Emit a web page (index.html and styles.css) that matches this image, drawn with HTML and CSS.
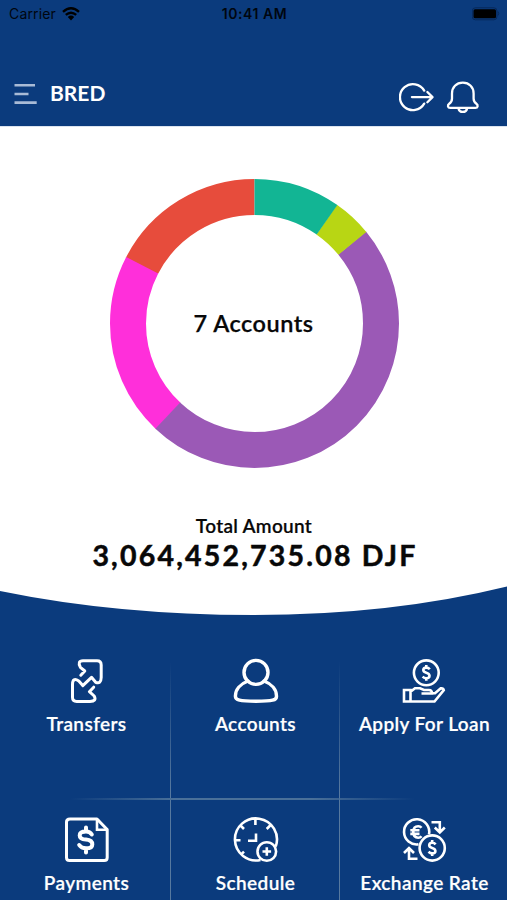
FILE: index.html
```html
<!DOCTYPE html>
<html lang="en">
<head>
<meta charset="utf-8">
<meta name="viewport" content="width=device-width, initial-scale=1">
<title>BRED</title>
<link rel="stylesheet" href="styles.css">
</head>
<body>
<div class="app">
  <header class="header">
    <div class="status">
      <div class="carrier">
        <span>Carrier</span>
        <svg width="18" height="14" viewBox="0 0 18 14"><path d="M1 4.8Q9-2.3 17 4.8M3.8 7.9Q9 3.4 14.2 7.9" fill="none" stroke="#000" stroke-width="2.4"/><path d="M5.8 10Q9 7.2 12.2 10L9 13.4Z"/></svg>
      </div>
      <div class="clock">10:41 AM</div>
      <svg class="battery" width="28" height="14" viewBox="0 0 28 14"><rect x=".3" y=".8" width="24.6" height="12" rx="3" fill="none" stroke="#07295b"/><rect x="1.5" y="2.3" width="22.5" height="9" rx="1.5"/><path d="M26 4.5q1.5 2 0 4" stroke="#07295b" fill="none"/></svg>
    </div>
    <div class="navbar">
      <svg class="menu" width="24" height="24" viewBox="0 0 24 24"><path d="M.5 2.2H21M.5 11H14.5M.5 19.6H22.7"/></svg>
      <h1 class="brand">BRED</h1>
      <svg class="nav-icon" width="36" height="34" viewBox="0 0 36 34"><path d="M25.2 9.6A13 13 0 1 0 25.2 22.6M12.9 16.1H33M28.4 11L33.5 16.1 28.4 21.2"/></svg>
      <svg class="nav-icon" width="34" height="34" viewBox="0 0 34 34"><path d="M16.8 1.7C10.3 1.7 6 6.3 6 12.5V17.5C6 20 4.8 21.7 3.2 22.8C1.1 24.3 1.8 26.9 4.2 26.9H29.4C31.8 26.9 32.5 24.3 30.4 22.8C28.8 21.7 27.6 20 27.6 17.5V12.5C27.6 6.3 23.3 1.7 16.8 1.7ZM12.5 27.4Q13.2 30.9 16.8 30.9T21.1 27.4"/></svg>
    </div>
  </header>

  <main class="summary">
    <div class="chart">
      <svg class="donut" width="290" height="290" viewBox="-145.5 -145.5 290 290">
        <g transform="rotate(-90)" fill="none" stroke-width="36">
          <circle r="126.5" stroke="#e74c3c" pathLength="360" stroke-dasharray="0 297 63 360"/>
          <circle r="126.5" stroke="#ff2fda" pathLength="360" stroke-dasharray="0 223 74.4 360"/>
          <circle r="126.5" stroke="#9b59b6" pathLength="360" stroke-dasharray="0 50.5 172.8 360"/>
          <circle r="126.5" stroke="#b8d614" pathLength="360" stroke-dasharray="0 34.8 15.9 360"/>
          <circle r="126.5" stroke="#12b594" pathLength="360" stroke-dasharray="35 360"/>
        </g>
      </svg>
      <div class="count">7 Accounts</div>
    </div>
    <div class="total-label">Total Amount</div>
    <div class="total">3,064,452,735.08 DJF</div>
  </main>
  <svg class="curve" width="507" height="36" viewBox="0 0 507 36"><path d="M0 0H507V6.5Q391 35 254 35T0 11Z"/></svg>

  <nav class="grid">
    <a class="tile">
      <svg class="icon" width="46" height="46" viewBox="0 0 46 46"><path d="M16.8 17.2L20.8 13 16.4 9.3Q13 3 19 2.8H33Q37.2 2.8 37.2 7V19.5Q37 26.5 31.7 24.3L27.5 19.3 18.8 27.6 14.8 23Q8.5 19 8.5 26.5V39.3Q8.5 43.5 12.7 43.5H26Q33 43.3 30.2 38L25.4 33.7 29.7 29.2"/></svg>
      <span class="label">Transfers</span>
    </a>
    <a class="tile">
      <svg class="icon thick" width="46" height="46" viewBox="0 0 46 46"><circle cx="23" cy="14.4" r="12"/><path d="M15 23C7 26 2.5 32 2.4 38C2.2 42.2 6.5 43.3 23 43.3S43.8 42.2 43.5 38C43.4 32 39 26 31 23"/></svg>
      <span class="label">Accounts</span>
    </a>
    <a class="tile">
      <svg class="icon" width="46" height="46" viewBox="1 0 46 46"><g class="medium"><circle cx="25.3" cy="14.8" r="12.4"/><path d="M28.8 11.2Q27.5 9.6 25.3 9.6Q22.3 9.6 22.3 12.1Q22.3 14 25.3 14.8T28.5 17.7Q28.5 20.2 25.3 20.2Q23.3 20.2 21.6 18.6M25.3 7V10M25.3 19.5V22.7M3 32H9.5V43.5H3ZM9.5 33.8L14 30.2H19L23 32H28Q31 32 31 35.5H20.5M31 35.2H34L39.5 30.4Q42.4 30 42.8 32.2L33.5 43.5H9.5"/></g></svg>
      <span class="label">Apply For Loan</span>
    </a>
    <a class="tile">
      <svg class="icon" width="46" height="46" viewBox="0 0 46 46"><path d="M6 2H33L43.2 12.5V40.5Q43.2 43.5 40.2 43.5H5.5Q2.5 43.5 2.5 40.5V5Q2.5 2 6 2Z"/><path class="medium" d="M33 3V12.8H42.5"/><path class="dollar" d="M27.8 17.5Q26 14.5 22 14.5Q15.7 14.5 15.7 18.4Q15.7 22 22 22.6T28.3 27.4Q28.3 31.3 22 31.3Q17.3 31.3 15.2 28M22 10.5V14M22 31.5V35.5"/></svg>
      <span class="label">Payments</span>
    </a>
    <a class="tile">
      <svg class="icon" width="46" height="46" viewBox="1 0 46 46"><g class="medium"><path d="M28.5 42.9A21 21 0 1 1 43.7 29.5M23.4 2V8M2.5 23.3H8.5M8.5 8.5L12 12M38.2 8.5L34.7 12M8.5 38.2L12 34.7M24 16.5V23.7H16"/><circle cx="34.8" cy="34.5" r="9.3"/><path d="M34.8 30.2V38.8M30.5 34.5H39.1"/></g></svg>
      <span class="label">Schedule</span>
    </a>
    <a class="tile">
      <svg class="icon" width="46" height="46" viewBox="1 0 46 46"><g class="medium"><path d="M17.5 27.3A12.6 12.6 0 1 1 28 17.3"/><circle cx="31.2" cy="31" r="12.6"/><path d="M20.5 10.8Q19.4 9.3 17.2 9.3Q12.3 9.3 12.3 15T17.2 20.7Q19.4 20.7 20.5 19.2M9.3 13.2H18.5M9.3 16.9H18.5M34.6 27.4Q33.4 25.8 31.2 25.8Q28.2 25.8 28.2 28.3Q28.2 30.2 31.2 31T34.4 33.9Q34.4 36.4 31.2 36.4Q29.2 36.4 27.5 34.8M31.2 23V26M31.2 36V39M30.5 5.2H38.8V14.5M33.8 10.5L38.8 15.5 43.8 10.5M16.5 41.8H8V31M3 36L8 31 13 36"/></g></svg>
      <span class="label">Exchange Rate</span>
    </a>
    <i class="rule v1"></i><i class="rule v2"></i><i class="rule h"></i>
  </nav>
</div>
</body>
</html>
```
FILE: styles.css
```css
* { box-sizing: border-box; }
body { margin: 0; background: #0b3b7d; font-family: Lato, "Liberation Sans", sans-serif; overflow: hidden; }
svg { display: block; flex: none; }
.app { width: 507px; height: 900px; overflow: hidden; background: #0b3b7d; }
.header { height: 127px; border-bottom: 1px solid #dbe4ef; }
.status { height: 28px; display: grid; grid-template-columns: 1fr auto 1fr; align-items: center; padding: 0 7px 1px 9px; font-family: Inter, sans-serif; font-size: 14px; color: #00060f; }
.carrier { display: flex; align-items: center; gap: 6px; letter-spacing: .15px; }
.clock { font-weight: 600; letter-spacing: .55px; }
.battery { justify-self: end; }
.navbar { display: flex; align-items: center; padding: 53px 27px 0 14px; }
.menu { margin-top: -7px; fill: none; stroke: #a9bbd6; stroke-width: 2.6; }
.brand { flex: 1; margin: -10px 0 0 12px; font: 700 21px/30px Lato, sans-serif; color: #fff; }
.nav-icon { fill: none; stroke: #fff; stroke-width: 2.3; stroke-linecap: round; stroke-linejoin: round; }
.nav-icon + .nav-icon { margin-left: 11px; }
.summary { height: 453px; padding-top: 51px; background: #fff; color: #080808; text-align: center; }
.chart { display: grid; justify-items: center; align-items: center; padding-left: 2px; }
.donut, .count { grid-area: 1 / 1; }
.donut { margin-left: -1px; }
.count { margin-top: -1px; margin-left: -2px; font-size: 23.5px; font-weight: 600; line-height: 30px; letter-spacing: .5px; -webkit-text-stroke: .25px; }
.total-label { margin-top: 45px; padding-left: 1px; font-size: 19px; font-weight: 600; line-height: 26px; letter-spacing: .3px; -webkit-text-stroke: .2px; }
.total { margin-top: -1px; font-size: 28.5px; font-weight: 700; line-height: 34px; letter-spacing: 2.2px; padding-left: 3px; -webkit-text-stroke: .5px; }
.curve path { fill: #fff; }
.grid { position: relative; display: grid; grid-template-columns: repeat(3, 169px); grid-template-rows: 159px 159px; padding-top: 42px; padding-left: 2px; }
.tile { display: flex; flex-direction: column; align-items: center; color: #fff; }
.icon { fill: none; stroke: #fff; stroke-width: 3; stroke-linecap: round; stroke-linejoin: round; }
.medium { stroke-width: 2.6; stroke-linecap: butt; stroke-linejoin: miter; }
.thick { stroke-width: 3.4; }
.dollar { stroke-width: 4; }
.label { margin-top: 7px; font-size: 19px; font-weight: 600; line-height: 26px; white-space: nowrap; letter-spacing: .4px; -webkit-text-stroke: .2px; }
.rule { position: absolute; }
.v1, .v2 { top: 45px; bottom: 0; width: 1px; background: linear-gradient(transparent, #57799f 130px); }
.v1 { left: 170px; }
.v2 { left: 339px; }
.h { top: 182px; left: 70px; width: 345px; height: 2px; background: linear-gradient(90deg, transparent, #4a7099 30%, #4a7099 70%, transparent); }
```
